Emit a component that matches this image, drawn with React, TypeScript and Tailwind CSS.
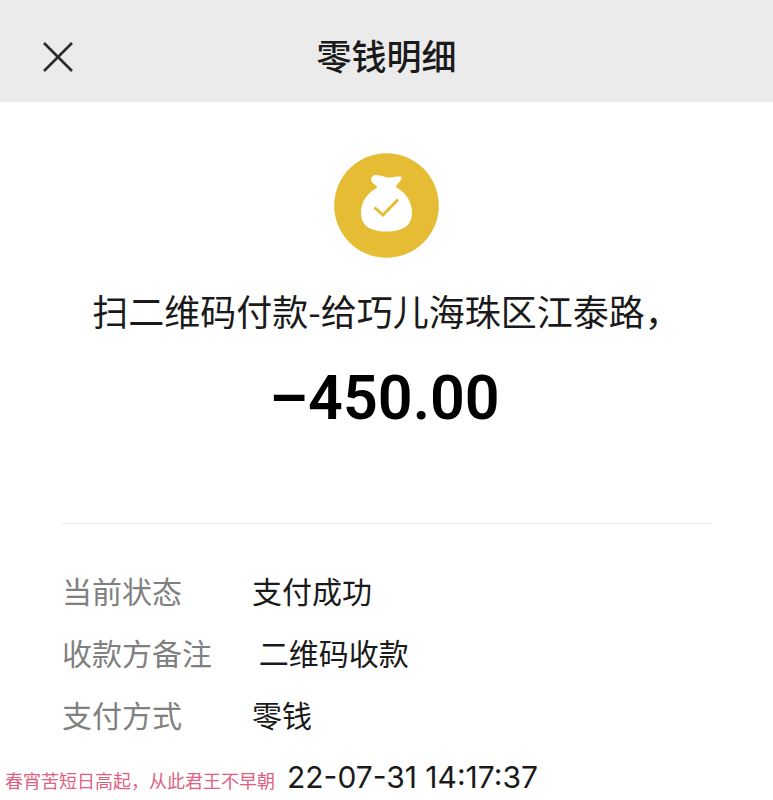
import { FC } from 'react'

interface Detail {
  label: string
  value: string
}

const details: Detail[] = [
  { label: '当前状态', value: '支付成功' },
  { label: '收款方备注', value: '\u00a0二维码收款' },
  { label: '支付方式', value: '零钱' },
]

const CloseIcon: FC = () => (
  <svg
    className="size-8"
    viewBox="0 0 32 32"
    fill="none"
    stroke="#2b2b2b"
    strokeWidth="2.6"
    aria-hidden="true"
  >
    <path d="M2 2l28 28M30 2L2 30" />
  </svg>
)

const MoneyBag: FC = () => (
  <svg className="size-[106px]" viewBox="0 0 106 106" aria-hidden="true">
    <circle cx="52.5" cy="53.5" r="52.3" fill="#e5bc34" />
    <path
      fill="#fff"
      d="M40.500 23.200C46 22 50 25.500 55 25.500c4 0 7-1.300 11-.9 1.800.2 2.200 1.700 1.200 3L62.500 33.500c-.8 1.100-.3 2 1 2.800C72 41 78 50 78 60.500 78 73 70 79.500 52.500 79.500S27 73 27 60.500C27 50 33 41.500 42 36.500c1.400-.9 1.400-1.800.2-2.800l-3.500-2.700c-2.500-2-1.900-7 1.800-7.800z"
    />
    <path d="M40.500 55.500l8.500 7.500L64 47.500" fill="none" stroke="#e5bc34" strokeWidth="3" />
  </svg>
)

const App: FC = () => {
  return (
    <div className="min-h-screen bg-white font-['Inter','Noto_Sans_CJK_SC',sans-serif] text-[#1a1a1a]">
      <header className="grid h-[102px] grid-cols-[1fr_auto_1fr] items-center bg-[#ebebeb] px-[42px] pt-3">
        <button type="button" aria-label="关闭" className="justify-self-start">
          <CloseIcon />
        </button>
        <h1 className="text-[35px] leading-[48px] font-medium">零钱明细</h1>
      </header>

      <main>
        <section className="flex flex-col items-center px-6 pt-[50px]">
          <MoneyBag />
          <h2 className="mt-[26px] font-['Noto_Sans_CJK_SC',sans-serif] text-[36px] leading-[52px] font-normal">
            扫二维码付款-给巧儿海珠区江泰路，
          </h2>
          <p className="mt-[26px] pr-1 font-[Roboto,sans-serif] text-[61px] leading-[72px] font-semibold text-black">
            –450.00
          </p>
        </section>

        <section className="mt-[89px]">
          <hr className="mx-[62px] border-[#e8e8e8]" />
          <dl className="mt-[35px] px-[62px] font-['Noto_Sans_CJK_SC',sans-serif] text-[30px] leading-[62px]">
            {details.map(({ label, value }) => (
              <div key={label} className="grid grid-cols-[190px_1fr]">
                <dt className="text-[#808080]">{label}</dt>
                <dd>{value}</dd>
              </div>
            ))}
          </dl>
          <div className="mt-2.5 flex items-baseline gap-3 pl-[5px] text-[30px] leading-[44px] whitespace-nowrap">
            <span className="text-[18px] text-[#e0607f]">春宵苦短日高起，从此君王不早朝</span>
            <time dateTime="2022-07-31T14:17:37">22-07-31 14:17:37</time>
          </div>
        </section>
      </main>
    </div>
  )
}

export default App
